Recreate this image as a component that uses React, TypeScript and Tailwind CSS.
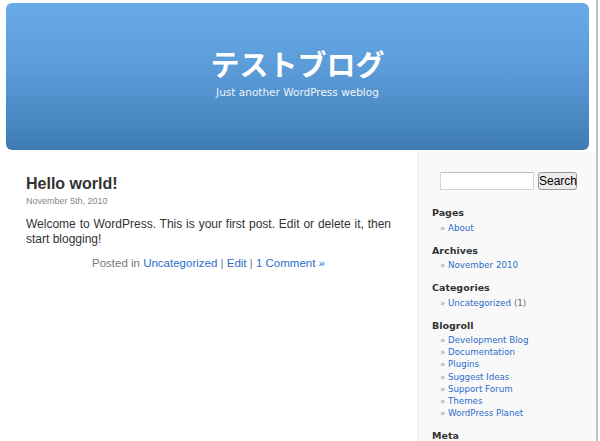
import React from 'react';

const sans = { fontFamily: '"Liberation Sans", Arial, sans-serif' };

interface SideSection {
  title: string;
  items: { label: string; count?: string }[];
}

const sections: SideSection[] = [
  { title: 'Pages', items: [{ label: 'About' }] },
  { title: 'Archives', items: [{ label: 'November 2010' }] },
  { title: 'Categories', items: [{ label: 'Uncategorized', count: '(1)' }] },
  {
    title: 'Blogroll',
    items: [
      { label: 'Development Blog' },
      { label: 'Documentation' },
      { label: 'Plugins' },
      { label: 'Suggest Ideas' },
      { label: 'Support Forum' },
      { label: 'Themes' },
      { label: 'WordPress Planet' },
    ],
  },
  { title: 'Meta', items: [] },
];

export default function App() {
  return (
    <div className="w-[600px] h-[441px] overflow-hidden bg-white flex">
      <div className="w-[598px] h-full flex flex-col border-r-2 border-[#c2c2c2] bg-white">
        {/* Cabecera */}
        <header className="ml-[6px] mr-[7px] mt-[3px] h-[147px] shrink-0 rounded-[6px] bg-[linear-gradient(to_bottom,#69aae8,#5a9bd8_45%,#3f7cb5)] flex flex-col items-center">
          <h1 className="mt-[40px] text-[29px] leading-[40px] font-bold text-white font-['Noto_Sans_CJK_JP',sans-serif]">
            テストブログ
          </h1>
          <p className="mt-[2px] text-[10.5px] leading-[14px] text-[#eef4fb] font-['DejaVu_Sans',sans-serif]">
            Just another WordPress weblog
          </p>
        </header>

        <div className="flex flex-1 mt-[2px] min-h-0">
          {/* Contenido */}
          <main className="w-[417px] shrink-0 pl-[26px] pr-[26px] pt-[22px]" style={sans}>
            <h2 className="text-[16px] leading-[20px] font-bold text-[#333]">Hello world!</h2>
            <p className="mt-[1px] text-[9px] leading-[12px] text-[#888]">November 5th, 2010</p>
            <p className="mt-[10px] text-[12px] leading-[15px] text-[#333] text-justify">
              Welcome to WordPress. This is your first post. Edit or delete it, then start blogging!
            </p>
            <p className="mt-[9px] text-[11.5px] leading-[15px] text-[#777] text-center">
              Posted in <a className="text-[#2c6fc8]">Uncategorized</a> | <a className="text-[#2c6fc8]">Edit</a> |{' '}
              <a className="text-[#2c6fc8]">1 Comment »</a>
            </p>
          </main>

          {/* Barra lateral */}
          <aside className="flex-1 bg-[linear-gradient(to_right,#f0f0f0,#f9f9f9_3px)] pt-[20px] font-['DejaVu_Sans',sans-serif]">
            <form className="flex items-center gap-[4px] pl-[23px]" style={sans}>
              <input
                type="text"
                className="w-[94px] h-[18px] bg-white border border-[#d6d6d6] border-t-[#c0c0c0] outline-none"
              />
              <button
                type="button"
                className="h-[18px] w-[39px] rounded-[3px] border border-[#9a9a9a] bg-[#ececec] text-[12px] leading-[16px] text-black"
              >
                Search
              </button>
            </form>

            <div className="mt-[15px] pl-[15px] flex flex-col gap-[9px]">
              {sections.map((s) => (
                <div key={s.title}>
                  <h3 className="text-[9.5px] leading-[15px] font-bold text-[#333]">{s.title}</h3>
                  {s.items.length > 0 && (
                    <ul className="mt-[1.5px]">
                      {s.items.map((it) => (
                        <li key={it.label} className="flex text-[8.7px] leading-[12.1px] pl-[8px]">
                          <span className="w-[8px] text-[#9a9a9a]">»</span>
                          <a className="text-[#2c6dcb]">{it.label}</a>
                          {it.count && <span className="ml-[3px] text-[#666]">{it.count}</span>}
                        </li>
                      ))}
                    </ul>
                  )}
                </div>
              ))}
            </div>
          </aside>
        </div>
      </div>
    </div>
  );
}
